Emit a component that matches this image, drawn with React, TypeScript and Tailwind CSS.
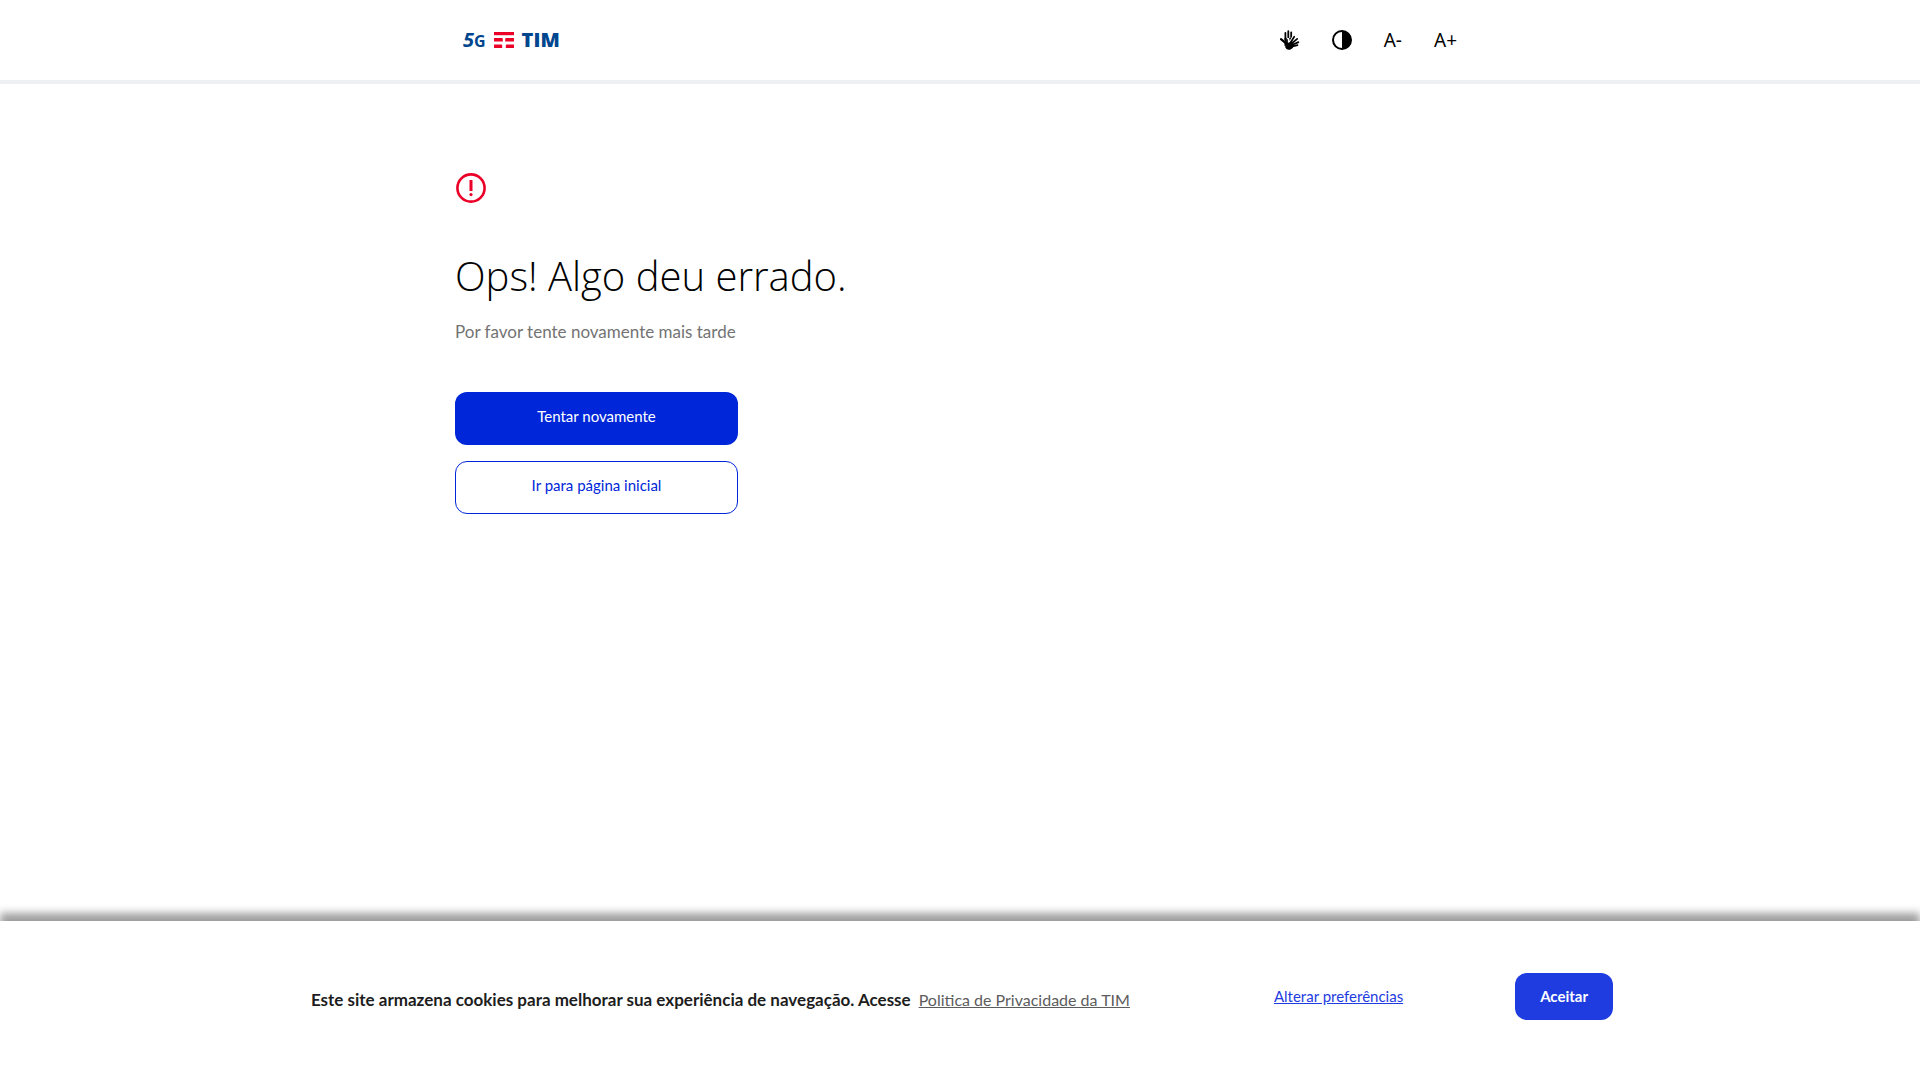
function Logo() {
  return (
    <a href="#" aria-label="TIM" className="flex items-center font-['Open_Sans',sans-serif] font-bold text-[#00468f]">
      <span className="flex items-baseline">
        <span className="text-xl leading-5 italic">5</span>
        <span className="text-base leading-5">G</span>
      </span>
      <svg className="ml-2 h-4 w-5" viewBox="0 0 20 16" fill="#eb0028">
        <path d="M0 0h20v3.2H0z" />
        <path d="M0 6h8q.8 0 .8.8v2.6H0zM20 6h-8q-.8 0-.8.8v2.6H20z" />
        <path d="M0 12.6h7.2q1 0 1 .8V16H0zM20 12.6h-7.2q-1 0-1 .8V16H20z" />
      </svg>
      <span className="ml-2 text-xl leading-6 font-extrabold">TIM</span>
    </a>
  );
}

function LibrasIcon() {
  return (
    <svg className="size-5" viewBox="0 0 20 20" fill="none" strokeLinecap="round">
      <g stroke="#000" strokeWidth="1.8">
        <path d="M5.4 9.5V3M8.3 9V1.2M11.2 9V2.4" />
        <path d="M1 9.2l4.4 3.6" strokeWidth="2.2" />
      </g>
      <path d="M4.5 8h7.5v5l-7.5 3z" fill="#000" />
      <path d="M8 9.3v6M9.5 14l4.6-8" stroke="#fff" strokeWidth="3" />
      <g stroke="#000" strokeWidth="1.7">
        <path d="M7 9.8v5M10 13.5l4.2-6.8M11 14l6.2-5.2M11.5 15.2l6.9-3.1M11.5 16.8l6-1.7" />
      </g>
      <path d="M6 12q3 1.6 5.2-.8l3 3.6q-.8 3.6-3.6 4.6-3.6 1-5-1.4-1-2.5.4-6z" fill="#000" />
    </svg>
  );
}

function ContrastIcon() {
  return (
    <svg className="size-5" viewBox="0 0 20 20">
      <circle cx="10" cy="10" r="9" fill="none" stroke="currentColor" strokeWidth="2" />
      <path d="M10 1a9 9 0 0 1 0 18z" />
    </svg>
  );
}

function Header() {
  return (
    <header className="border-b-4 border-[#eff0f3] bg-white">
      <div className="mx-auto flex h-20 max-w-[1010px] items-center justify-between px-2">
        <Logo />
        <div className="flex items-center gap-8 font-['Noto_Sans',sans-serif] text-[19px] text-black">
          <button type="button" aria-label="Libras">
            <LibrasIcon />
          </button>
          <button type="button" aria-label="Contraste">
            <ContrastIcon />
          </button>
          <button type="button">A-</button>
          <button type="button">A+</button>
        </div>
      </div>
    </header>
  );
}

function CookieBar() {
  return (
    <section
      aria-label="Cookies"
      className="flex h-[159px] items-center justify-center bg-white pb-2 pl-1 shadow-[0_-8px_8px_rgba(0,0,0,0.38)]"
    >
      <p className="mt-1.5 text-[17px] font-bold text-[#1d1d1d]">
        Este site armazena cookies para melhorar sua experiência de navegação. Acesse
        <a href="#" className="ml-2 text-base font-normal text-[#5c5c5c] underline">
          Politica de Privacidade da TIM
        </a>
      </p>
      <a href="#" className="ml-36 text-[15px] text-[#1e3cdf] underline">
        Alterar preferências
      </a>
      <button
        type="button"
        className="ml-28 h-[47px] rounded-xl bg-[#1e3cdf] px-[25px] text-[15px] font-bold text-white"
      >
        Aceitar
      </button>
    </section>
  );
}

export default function App() {
  return (
    <div className="flex min-h-screen flex-col overflow-x-hidden bg-white font-['Lato',sans-serif]">
      <Header />
      <main className="mx-auto w-full max-w-[1010px] flex-1 pt-22">
        <svg className="size-8" viewBox="0 0 32 32" fill="none" stroke="#eb0028" strokeWidth="2.6">
          <circle cx="16" cy="16" r="13.6" />
          <path d="M16 8v11" strokeWidth="3" />
          <circle cx="16" cy="22.6" r="1.6" fill="#eb0028" stroke="none" />
        </svg>
        <h1 className="mt-11 font-['Open_Sans',sans-serif] text-[40px] leading-14 font-light text-black">
          Ops! Algo deu errado.
        </h1>
        <p className="mt-4 text-[17px] leading-6 text-[#737373]">Por favor tente novamente mais tarde</p>
        <div className="mt-12 flex w-[283px] flex-col gap-4">
          <button type="button" className="h-[53px] rounded-xl bg-[#0026d9] pb-1 text-[15px] text-white">
            Tentar novamente
          </button>
          <button
            type="button"
            className="h-[53px] rounded-xl border border-[#0026d9] bg-white pb-1 text-[15px] text-[#0026d9]"
          >
            Ir para página inicial
          </button>
        </div>
      </main>
      <CookieBar />
    </div>
  );
}
